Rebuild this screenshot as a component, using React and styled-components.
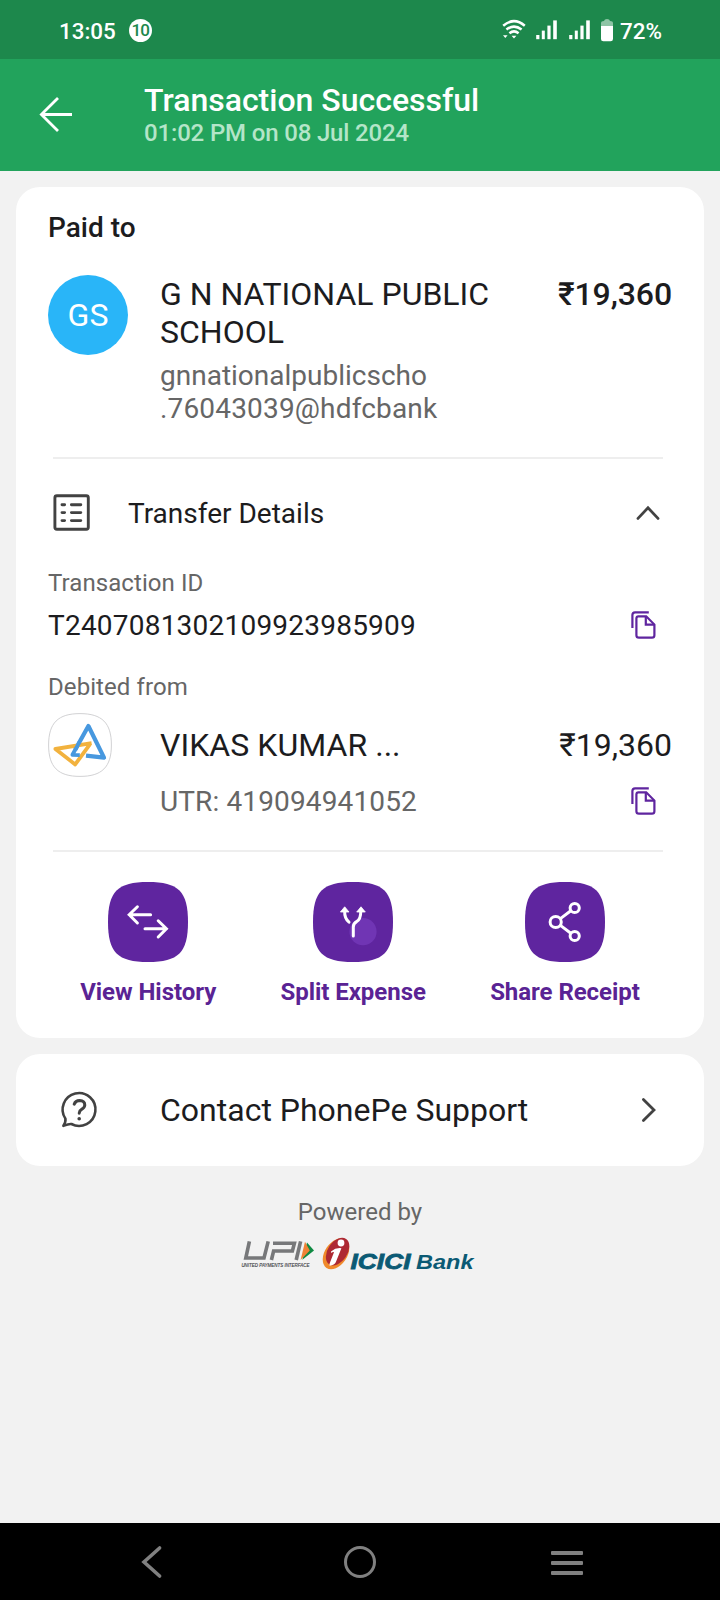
/* eslint-disable react/prop-types */
import React from 'react';
import styled, { createGlobalStyle } from 'styled-components';

const GlobalStyle = createGlobalStyle`
  * {
    box-sizing: border-box;
  }
  body {
    margin: 0;
    background: #f2f2f2;
    font-family: Roboto, sans-serif;
    color: #1c1c1e;
  }
  svg {
    display: block;
    flex-shrink: 0;
    overflow: visible;
  }
`;

const Screen = styled.div`
  display: flex;
  flex-direction: column;
  width: 720px;
  height: 1600px;
  overflow: hidden;
  background: #f2f2f2;
`;

const StatusBar = styled.div`
  display: flex;
  align-items: center;
  height: 59px;
  padding: 1px 58px 0 59px;
  background: #1d884c;
  color: #ffffff;
`;

const StatusText = styled.span`
  padding-top: 1px;
  font-size: 22.4px;
  line-height: 30px;
  font-weight: 500;
`;

const Badge = styled.span`
  width: 23px;
  height: 23px;
  margin-left: 13px;
  border-radius: 50%;
  background: #ffffff;
  color: #1d884c;
  font-size: 17px;
  line-height: 23px;
  font-weight: 500;
  letter-spacing: -0.8px;
  text-align: center;
`;

const StatusIcons = styled.div`
  display: flex;
  align-items: center;
  margin-left: auto;
`;

const Header = styled.header`
  display: flex;
  height: 112px;
  padding-left: 38px;
  background: #22a35c;
`;

const BackArrow = styled.svg`
  margin-top: 37px;
`;

const HeaderText = styled.div`
  padding: 22px 0 0 70px;
`;

const Title = styled.h1`
  margin: 0;
  font-size: 32px;
  line-height: 38px;
  font-weight: 500;
  color: #ffffff;
`;

const Subtitle = styled.div`
  font-size: 24px;
  line-height: 28px;
  font-weight: 500;
  letter-spacing: -0.16px;
  color: #b4e5c8;
`;

const Card = styled.section`
  width: 688px;
  height: ${(props) => props.$height}px;
  margin: 16px auto 0;
  padding: 0 32px;
  border-radius: 24px;
  background: #ffffff;
`;

const PaidTo = styled.h2`
  margin: 0;
  padding-top: 25px;
  font-size: 28px;
  line-height: 32px;
  font-weight: 500;
`;

const PayeeRow = styled.div`
  display: flex;
  height: 150px;
  margin-top: 31px;
`;

const Avatar = styled.div`
  width: 80px;
  height: 80px;
  border-radius: 50%;
  background: #29b5f8;
  color: #ffffff;
  font-size: 32px;
  line-height: 80px;
  text-align: center;
`;

const PayeeInfo = styled.div`
  width: 345px;
  margin-left: 32px;
`;

const Name = styled.div`
  font-size: 32px;
  line-height: 38px;
`;

const Vpa = styled.div`
  margin-top: 8px;
  font-size: 28px;
  line-height: 33px;
  color: #666666;
`;

const VpaLine = styled.div`
  letter-spacing: ${(props) => props.$spacing || '0'};
`;

const Amount = styled.div`
  margin-left: auto;
  font-size: 32px;
  line-height: 38px;
  font-weight: ${(props) => (props.$bold ? 500 : 400)};
  letter-spacing: ${(props) => (props.$bold ? '-0.1px' : '0')};
`;

const Divider = styled.div`
  height: 2px;
  margin: ${(props) => props.$top}px 9px 0 5px;
  background: #eeeeee;
`;

const DetailsRow = styled.div`
  display: flex;
  align-items: center;
  height: 108px;
  padding: 0 13px 1px 5px;
`;

const DetailsTitle = styled.div`
  flex: 1;
  margin-left: 38px;
  padding-top: 2px;
  font-size: 28px;
  line-height: 36px;
`;

const Label = styled.div`
  margin-top: ${(props) => props.$top}px;
  font-size: 24px;
  line-height: 30px;
  letter-spacing: 0.08px;
  color: #666666;
`;

const ValueRow = styled.div`
  display: flex;
  align-items: center;
  justify-content: space-between;
  height: 36px;
  margin-top: ${(props) => props.$top}px;
  padding: 0 16px 0 ${(props) => props.$indent || 0}px;
  color: ${(props) => props.$color || '#1c1c1e'};
`;

const Value = styled.span`
  padding-top: 2px;
  font-size: 28px;
  line-height: 36px;
  letter-spacing: ${(props) => props.$spacing || '0'};
`;

const BankRow = styled.div`
  display: flex;
  align-items: center;
  height: 64px;
  margin-top: 11px;
`;

const BankName = styled(Name)`
  margin-left: 48px;
  letter-spacing: 0.05px;
`;

const Actions = styled.div`
  display: flex;
  justify-content: space-around;
  margin-top: 30px;
`;

const Action = styled.div`
  display: flex;
  flex-direction: column;
  align-items: center;
`;

const ActionLabel = styled.div`
  margin-top: 15px;
  font-size: 24px;
  line-height: 30px;
  font-weight: 700;
  letter-spacing: -0.05px;
  color: #5a2394;
`;

const SupportRow = styled.div`
  display: flex;
  align-items: center;
  height: 100%;
  padding: 0 16px 1px 13px;
`;

const SupportText = styled.div`
  flex: 1;
  margin-left: 62px;
  padding-top: 1px;
  font-size: 32px;
  line-height: 38px;
`;

const Powered = styled.div`
  margin-top: 31px;
  font-size: 24px;
  line-height: 30px;
  color: #666666;
  text-align: center;
`;

const Logos = styled.div`
  display: flex;
  justify-content: center;
  gap: 4px;
  margin-top: 9px;
  padding-right: 4px;
`;

const NavBar = styled.nav`
  display: flex;
  align-items: center;
  height: 77px;
  margin-top: auto;
  padding-left: 141px;
  background: #000000;
`;

const NavHome = styled.div`
  width: 32px;
  height: 32px;
  margin-left: 182px;
  border: 3.6px solid #808080;
  border-radius: 50%;
`;

const NavMenu = styled.div`
  display: flex;
  flex-direction: column;
  gap: 6px;
  width: 32px;
  margin-left: 175px;
  padding-top: 2px;
`;

const NavLine = styled.span`
  height: 4px;
  border-radius: 1px;
  background: #808080;
`;

const WifiIcon = () => (
  <svg width="24" height="22" viewBox="0 0 24 22" fill="none" stroke="#fff" strokeWidth="2.5">
    <path d="M1.2 6.8Q12 -2.6 22.8 6.8" />
    <path d="M4.4 10.6Q12 4.6 19.6 10.6" />
    <path d="M7.4 14.2Q12 10.6 16.6 14.2" />
    <path d="M9.6 16.8h4.8L12 19.6zM1 16.2h4.6L3.3 19z" fill="#fff" stroke="none" />
  </svg>
);

const SignalIcon = () => (
  <svg width="22" height="20" viewBox="0 0 22 20" fill="#fff">
    <rect x="0.2" y="15" width="3.2" height="4.2" />
    <rect x="5.8" y="10.6" width="3" height="8.6" />
    <rect x="11.4" y="5.6" width="3.2" height="13.6" />
    <rect x="17.2" y="0.4" width="3.6" height="18.8" />
  </svg>
);

const BatteryIcon = () => (
  <svg width="12" height="23" viewBox="0 0 12 23">
    <path d="M0 7V4.2Q0 2 3 2Q3.4 0 6 0T9 2Q12 2 12 4.2V7Z" fill="#8ec4a5" />
    <path d="M0 7H12V20Q12 22.3 9.6 22.3H2.4Q0 22.3 0 20Z" fill="#fff" />
  </svg>
);

const ListIcon = () => (
  <svg width="37" height="37" viewBox="0 0 37 37" fill="none" stroke="#424242" strokeWidth="2.9">
    <rect x="1.9" y="1.8" width="33.4" height="33.4" rx="2" />
    <path
      d="M9 10.8h2.6M18.4 10.8h9.4M9 18.6h2.6M18.4 18.6h9.4M9 26.6h2.6M18.4 26.6h9.4"
      strokeLinecap="round"
    />
  </svg>
);

const CopyIcon = () => (
  <svg width="25" height="28" viewBox="0 0 25 28" fill="none" stroke="#5f259f" strokeWidth="2.2">
    <path d="M1.4 17V4Q1.4 1.3 4 1.3H17.8" />
    <path d="M7.4 5.3H15.2L23.4 13.6V24.2Q23.4 26.7 21 26.7H7.9Q5.4 26.7 5.4 24.2V7.6Q5.4 5.3 7.4 5.3Z" />
    <path d="M14.8 5.3V13.6H23.4" />
  </svg>
);

const BankLogo = () => (
  <svg width="64" height="64" viewBox="0 0 64 64" fill="none" strokeLinejoin="round">
    <path
      d="M32 .6C54 .6 63.4 10 63.4 32S54 63.4 32 63.4 .6 54 .6 32 10 .6 32 .6Z"
      fill="#fff"
      stroke="#d2d2d4"
      strokeWidth="1"
    />
    <path d="M27.2 36.8L40.4 13L56 44.6L38 42.7" stroke="#4798df" strokeWidth="4.2" />
    <path d="M43.6 30.2L7.4 36L27.2 51.4L42.6 30.4" stroke="#f2b23e" strokeWidth="3.8" />
    <path d="M31.6 29L24.4 41.8L31.8 42.2" stroke="#4798df" strokeWidth="3.8" />
  </svg>
);

const Squircle = ({ children }) => (
  <svg width="80" height="80" viewBox="0 0 80 80" fill="none">
    <path d="M40 0C70.5 0 80 9.5 80 40S70.5 80 40 80 0 70.5 0 40 9.5 0 40 0Z" fill="#5f259f" />
    {children}
  </svg>
);

const HistoryGlyph = () => (
  <g stroke="#fff" strokeWidth="3" strokeLinecap="round">
    <path d="M42.6 32.7H21.4M29.4 24.8L21.2 32.8L29.4 41" />
    <path d="M37 46.7H58.4M50.2 38.8L58.4 46.8L50.2 55" />
  </g>
);

const SplitGlyph = () => (
  <>
    <circle cx="50" cy="49.7" r="13.6" fill="#7035b4" />
    <path
      d="M31.7 24.8L36 30H27.4ZM48 24.8L52.3 30H43.7Z"
      fill="#fff"
      stroke="#fff"
      strokeWidth="0.8"
      strokeLinejoin="round"
    />
    <path
      d="M31.7 29C31.4 34 33 37.6 36 40.2M47.8 29Q47.8 37.6 43.6 39.6Q40.3 41.4 40.3 45V54"
      stroke="#fff"
      strokeWidth="3"
      strokeLinecap="round"
    />
  </>
);

const ShareGlyph = () => (
  <g stroke="#fff" strokeWidth="3">
    <circle cx="30.7" cy="40" r="5.6" />
    <circle cx="49.7" cy="26" r="4.6" />
    <circle cx="49.7" cy="54" r="4.6" />
    <path d="M35.4 36.6L45.8 28.8M35.4 43.4L45.8 51.2" />
  </g>
);

const HelpIcon = () => (
  <svg width="37" height="37" viewBox="0 0 37 37" fill="none" stroke="#424242" strokeWidth="2.6" strokeLinecap="round">
    <path d="M4.4 27.6A16.4 16.4 0 1 1 10.4 33Q8.4 32.6 2.4 34.8Q5 30.8 4.4 27.6Z" strokeLinejoin="round" />
    <path d="M13.2 13.2Q14.4 9.6 18.6 9.6Q23.8 9.8 23.8 14.2Q23.6 16.8 20.6 18.4Q18.4 19.6 18.2 22.2" strokeWidth="3" />
    <circle cx="18.2" cy="27.7" r="1.8" fill="#424242" stroke="none" />
  </svg>
);

const UpiLogo = () => (
  <svg width="76" height="36" viewBox="0 0 76 36">
    <g fill="none" stroke="#77787a" strokeWidth="3.6">
      <path d="M9.4 5.4L5.8 22H24L28.2 5.4" />
      <path d="M31.4 24L33.6 15H52.4L54.4 7.2H33" />
      <path d="M60.6 5.4L56.2 24" />
    </g>
    <path d="M67 6.6L74 14.6L62.4 23.8Z" fill="#0f8a43" />
    <path d="M65 5.8L69.8 14.4L60.6 24Z" fill="#f08236" />
    <text
      x="1.4"
      y="31"
      fontFamily="Liberation Sans, sans-serif"
      fontSize="4.9"
      fontStyle="italic"
      fill="#44454a"
      stroke="#44454a"
      strokeWidth="0.15"
      textLength="68"
      lengthAdjust="spacingAndGlyphs"
    >
      UNITED PAYMENTS INTERFACE
    </text>
  </svg>
);

const IciciLogo = () => (
  <svg width="156" height="36" viewBox="0 0 156 36">
    <ellipse cx="16" cy="17.8" rx="11.2" ry="17" transform="rotate(34 16 17.8)" fill="#f08a2c" />
    <ellipse cx="17.6" cy="15.6" rx="9.8" ry="15.2" transform="rotate(34 17.6 15.6)" fill="#ae2a33" />
    <circle cx="21" cy="7" r="3.4" fill="#fff" />
    <path d="M11 15.4Q16 11.4 21.4 12.2L15.8 26.2Q14.6 29 9.6 29.8Q9 28.6 10.2 26L14 16.2Q12.8 15.8 11.2 17Z" fill="#fff" />
    <text
      x="30.5"
      y="32.8"
      fontFamily="Liberation Sans, sans-serif"
      fontSize="21.4"
      fontStyle="italic"
      fontWeight="700"
      fill="#0b5a74"
      stroke="#0b5a74"
      strokeWidth="0.8"
      textLength="60"
      lengthAdjust="spacingAndGlyphs"
    >
      ICICI
    </text>
    <text
      x="96"
      y="32.8"
      fontFamily="Liberation Sans, sans-serif"
      fontSize="21"
      fontStyle="italic"
      fontWeight="700"
      fill="#0b5a74"
      textLength="57.6"
      lengthAdjust="spacingAndGlyphs"
    >
      Bank
    </text>
  </svg>
);

const ACTIONS = [
  { label: 'View History', Glyph: HistoryGlyph },
  { label: 'Split Expense', Glyph: SplitGlyph },
  { label: 'Share Receipt', Glyph: ShareGlyph },
];

const Gap = styled.span`
  width: ${(props) => props.$size}px;
`;

const App = () => {
  return (
    <>
      <GlobalStyle />
      <Screen>
        <StatusBar>
          <StatusText>13:05</StatusText>
          <Badge>10</Badge>
          <StatusIcons>
            <WifiIcon />
            <Gap $size={10} />
            <SignalIcon />
            <Gap $size={11} />
            <SignalIcon />
            <Gap $size={10} />
            <BatteryIcon />
            <Gap $size={7} />
            <StatusText>72%</StatusText>
          </StatusIcons>
        </StatusBar>

        <Header>
          <BackArrow width="36" height="36" viewBox="0 0 36 36" fill="none" stroke="#fff" strokeWidth="2.8">
            <path d="M34 18.5H3.6M20 2L3.4 18.5L20 35" />
          </BackArrow>
          <HeaderText>
            <Title>Transaction Successful</Title>
            <Subtitle>01:02 PM on 08 Jul 2024</Subtitle>
          </HeaderText>
        </Header>

        <Card $height={851}>
          <PaidTo>Paid to</PaidTo>
          <PayeeRow>
            <Avatar>GS</Avatar>
            <PayeeInfo>
              <Name>G N NATIONAL PUBLIC SCHOOL</Name>
              <Vpa>
                <VpaLine>gnnationalpublicscho</VpaLine>
                <VpaLine $spacing="0.17px">.76043039@hdfcbank</VpaLine>
              </Vpa>
            </PayeeInfo>
            <Amount $bold>₹19,360</Amount>
          </PayeeRow>
          <Divider $top={32} />

          <DetailsRow>
            <ListIcon />
            <DetailsTitle>Transfer Details</DetailsTitle>
            <svg width="22" height="14" viewBox="0 0 22 14" fill="none" stroke="#424242" strokeWidth="2.8">
              <path d="M1 12.4L11 1.8L21 12.4" strokeLinecap="round" />
            </svg>
          </DetailsRow>

          <Label $top={1}>Transaction ID</Label>
          <ValueRow $top={9}>
            <Value $spacing="0.22px">T2407081302109923985909</Value>
            <CopyIcon />
          </ValueRow>
          <Label $top={29}>Debited from</Label>
          <BankRow>
            <BankLogo />
            <BankName>VIKAS KUMAR ...</BankName>
            <Amount>₹19,360</Amount>
          </BankRow>
          <ValueRow $top={6} $indent={112} $color="#666666">
            <Value $spacing="0.13px">UTR: 419094941052</Value>
            <CopyIcon />
          </ValueRow>
          <Divider $top={31} />

          <Actions>
            {ACTIONS.map(({ label, Glyph }) => (
              <Action key={label}>
                <Squircle>
                  <Glyph />
                </Squircle>
                <ActionLabel>{label}</ActionLabel>
              </Action>
            ))}
          </Actions>
        </Card>

        <Card $height={112}>
          <SupportRow>
            <HelpIcon />
            <SupportText>Contact PhonePe Support</SupportText>
            <svg width="14" height="24" viewBox="0 0 14 24" fill="none" stroke="#424242" strokeWidth="2.8">
              <path d="M1.4 1.4L12 12L1.4 22.6" strokeLinecap="round" />
            </svg>
          </SupportRow>
        </Card>

        <Powered>Powered by</Powered>
        <Logos>
          <UpiLogo />
          <IciciLogo />
        </Logos>

        <NavBar>
          <svg width="21" height="32" viewBox="0 0 21 32" fill="none" stroke="#808080" strokeWidth="3.6">
            <path d="M18.6 2L3 16L18.6 30" strokeLinecap="round" />
          </svg>
          <NavHome />
          <NavMenu>
            <NavLine />
            <NavLine />
            <NavLine />
          </NavMenu>
        </NavBar>
      </Screen>
    </>
  );
};

export default App;
